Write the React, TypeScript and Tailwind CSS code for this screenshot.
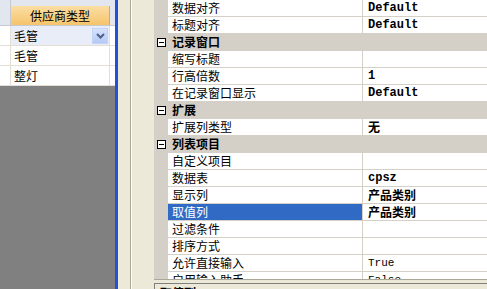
import React from 'react';

const cjk = '"Noto Sans CJK SC", "Noto Sans", sans-serif';
const mono = '"Liberation Mono", "Noto Sans CJK SC", monospace';

type Row =
  | { kind: 'cat'; label: string }
  | { kind: 'item'; label: string; value?: string; bold?: boolean; latin?: boolean; selected?: boolean };

const rows: Row[] = [
  { kind: 'item', label: '数据对齐', value: 'Default', bold: true, latin: true },
  { kind: 'item', label: '标题对齐', value: 'Default', bold: true, latin: true },
  { kind: 'cat', label: '记录窗口' },
  { kind: 'item', label: '缩写标题' },
  { kind: 'item', label: '行高倍数', value: '1', bold: true, latin: true },
  { kind: 'item', label: '在记录窗口显示', value: 'Default', bold: true, latin: true },
  { kind: 'cat', label: '扩展' },
  { kind: 'item', label: '扩展列类型', value: '无', bold: true },
  { kind: 'cat', label: '列表项目' },
  { kind: 'item', label: '自定义项目' },
  { kind: 'item', label: '数据表', value: 'cpsz', bold: true, latin: true },
  { kind: 'item', label: '显示列', value: '产品类别', bold: true },
  { kind: 'item', label: '取值列', value: '产品类别', bold: true, selected: true },
  { kind: 'item', label: '过滤条件' },
  { kind: 'item', label: '排序方式' },
  { kind: 'item', label: '允许直接输入', value: 'True', latin: true },
  { kind: 'item', label: '启用输入助手', value: 'False', latin: true },
];

function MinusBox() {
  return (
    <div className="w-[9px] h-[9px] border border-[#000] bg-white flex items-center justify-center">
      <div className="w-[5px] h-px bg-black" />
    </div>
  );
}

function PropRow({ row }: { row: Row }) {
  if (row.kind === 'cat') {
    return (
      <div className="flex h-[17px] shrink-0 bg-[#d4d0c8] border-b border-[#d4d0c8]">
        <div className="w-[14px] flex items-center pl-[3px]">
          <MinusBox />
        </div>
        <div className="pl-[4px] font-bold text-[12px] leading-[16px] text-black">{row.label}</div>
      </div>
    );
  }
  return (
    <div className="flex h-[17px] shrink-0">
      <div className="w-[14px] bg-[#d4d0c8]" />
      <div
        className={
          row.selected
            ? 'w-[195px] border-b border-r border-[#d4d0c8] bg-[#316ac5] text-white pl-[4px] text-[12px] leading-[16px]'
            : 'w-[195px] border-b border-r border-[#d4d0c8] bg-white text-black pl-[4px] text-[12px] leading-[16px]'
        }
      >
        {row.label}
      </div>
      <div
        className={
          row.bold
            ? 'flex-1 border-b border-[#d4d0c8] bg-white pl-[5px] text-black font-bold text-[12px] leading-[16px]'
            : 'flex-1 border-b border-[#d4d0c8] bg-white pl-[5px] text-black text-[11px] leading-[16px]'
        }
        style={{ fontFamily: row.latin ? mono : cjk }}
      >
        {row.value}
      </div>
    </div>
  );
}

function LeftGrid() {
  const items = ['毛管', '毛管', '整灯'];
  return (
    <div className="w-[115px] h-full shrink-0 bg-[#808080] flex flex-col">
      <div className="h-[26px] shrink-0 flex bg-[#e2e7ef] border-b border-[#c5c9d0]">
        <div className="w-[11px] border-r border-[#c5c9d0]" />
        <div className="w-[99px] mt-[6px] bg-gradient-to-b from-[#fbdea4] to-[#f5c46b] border-r border-[#e2a94b] flex items-center justify-center text-[12px] text-black">
          供应商类型
        </div>
        <div className="flex-1" />
      </div>
      {items.map((t, i) => (
        <div key={i} className="h-[20px] shrink-0 flex bg-white border-b border-[#e3dfd5]">
          <div className="w-[11px] border-r border-[#e3dfd5]" />
          <div
            className={
              i === 0
                ? 'w-[99px] flex items-center pl-[3px] pr-[1px] bg-[#e9edf8] border-r border-[#e3dfd5] text-[12px] text-black'
                : 'w-[99px] flex items-center pl-[3px] border-r border-[#e3dfd5] text-[12px] text-black'
            }
          >
            <span className="flex-1">{t}</span>
            {i === 0 && (
              <div className="w-[16px] h-[16px] bg-gradient-to-b from-[#d6e2fd] to-[#b5c9f5] border border-[#c3d3f8] flex items-center justify-center">
                <svg width="9" height="6" viewBox="0 0 9 6">
                  <path d="M1 1 L4.5 4.5 L8 1" stroke="#4d6185" strokeWidth="2" fill="none" />
                </svg>
              </div>
            )}
          </div>
          <div className="flex-1" />
        </div>
      ))}
    </div>
  );
}

export default function App() {
  return (
    <div className="w-[487px] h-[289px] flex overflow-hidden bg-[#ece9d8]" style={{ fontFamily: cjk }}>
      <LeftGrid />
      <div className="w-[3px] h-full shrink-0 bg-[#2151d8]" />
      <div className="w-[12px] h-full shrink-0 bg-[#ece9d8]" />
      <div className="w-px h-full shrink-0 bg-[#aca899]" />
      <div className="w-px h-full shrink-0 bg-white" />
      <div className="w-[22px] h-full shrink-0 bg-[#ece9d8]" />
      <div className="flex-1 h-full flex flex-col min-h-0">
        <div className="h-[280px] shrink-0 flex flex-col overflow-hidden border-b border-[#aca899]">
          {rows.map((r, i) => (
            <PropRow key={i} row={r} />
          ))}
        </div>
        <div className="h-[3px] shrink-0" />
        <div className="h-[6px] shrink-0 overflow-hidden border-t border-l border-[#808080] bg-[#ece9d8] pl-[5px] pt-[1px] font-bold text-[12px] leading-[16px] text-black">
          取值列
        </div>
      </div>
    </div>
  );
}
